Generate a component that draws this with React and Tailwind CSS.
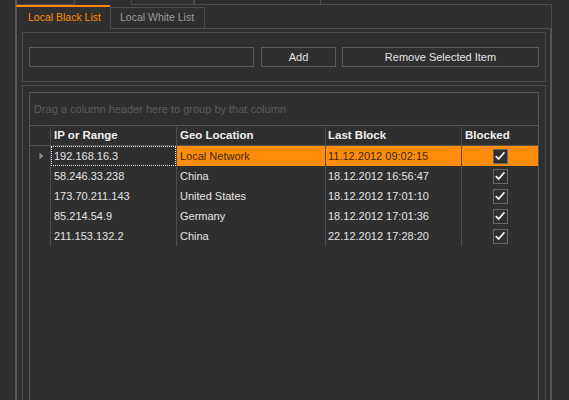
import React from 'react'

const rows = [
  { ip: '192.168.16.3', geo: 'Local Network', last: '11.12.2012 09:02:15' },
  { ip: '58.246.33.238', geo: 'China', last: '18.12.2012 16:56:47' },
  { ip: '173.70.211.143', geo: 'United States', last: '18.12.2012 17:01:10' },
  { ip: '85.214.54.9', geo: 'Germany', last: '18.12.2012 17:01:36' },
  { ip: '211.153.132.2', geo: 'China', last: '22.12.2012 17:28:20' },
]

const cols = 'grid grid-cols-[21px_126px_149px_136px_76px]'

function Check() {
  return (
    <div className="flex h-[15px] w-[15px] items-center justify-center border border-[#666] bg-[#2f2f2f]">
      <svg width="12" height="12" viewBox="0 0 12 12">
        <path d="M1.8 6.2 L4.6 9 L10.4 2.4" fill="none" stroke="#f0f0f0" strokeWidth="1.8" />
      </svg>
    </div>
  )
}

export default function App() {
  return (
    <div className="h-[400px] w-[569px] overflow-hidden bg-[#2f2f2f] pl-[15px] pr-[17px] font-['Liberation_Sans',Arial,sans-serif] text-[11px] text-[#e4e4e4]">
      {/* outer tab strip remnants */}
      <div className="flex h-[5px]">
        <div className="w-[60px] border-b border-l-2 border-r border-[#4c4c4c] border-l-[#565656]" />
        <div className="w-[56px]" />
        <div className="w-[63px] border-x border-b border-[#4c4c4c]" />
        <div className="w-[127px] border-x border-b border-[#4c4c4c]" />
        <div className="flex-1 border-b border-[#4c4c4c]" />
      </div>

      {/* tabs */}
      <div className="flex h-[24px]">
        <div className="flex w-[95px] items-center border-l-2 border-t-2 border-l-[#565656] border-t-[#ff8c00] pl-[11px] text-[10.5px] text-[#ff8c00]">
          Local Black List
        </div>
        <div className="mt-auto flex h-[22px] w-[95px] items-center border border-[#4c4c4c] pl-[9px] text-[10.5px] text-[#9c9c9c]">
          Local White List
        </div>
        <div className="flex-1 border-b border-r border-[#4c4c4c]" />
      </div>

      {/* tab page */}
      <div className="h-[380px] border-x-2 border-[#565656] pl-[5px] pr-[4px] pt-[3px]">
        <div className="flex h-[50px] items-center border border-[#4c4c4c] px-[6px]">
          <div className="h-[20px] w-[225px] border border-[#5a5a5a]" />
          <button className="ml-[7px] h-[20px] w-[75px] border border-[#5a5a5a] pt-[1px] text-[11px] text-[#e4e4e4]">
            Add
          </button>
          <button className="ml-[6px] h-[20px] flex-1 border border-[#5a5a5a] pt-[1px] text-[11px] text-[#e4e4e4]">
            Remove Selected Item
          </button>
        </div>

        <div className="mt-[3px] h-[400px] border border-[#4c4c4c] p-[6px]">
          <div className="h-[400px] border border-[#555]">
            <div className="flex h-[32px] items-center pl-[4px] pt-[1px] text-[#5c5c5c]">
              Drag a column header here to group by that column
            </div>
            <div className={`${cols} h-[21px] border-y border-[#555] pt-[1px] text-[11.5px] font-bold text-[#f0f0f0]`}>
              <div className="border-r border-[#4e4e4e]" />
              <div className="flex items-center border-r border-[#4e4e4e] pl-[3px]">IP or Range</div>
              <div className="flex items-center border-r border-[#4e4e4e] pl-[3px]">Geo Location</div>
              <div className="flex items-center border-r border-[#4e4e4e] pl-[2px]">Last Block</div>
              <div className="flex items-center pl-[3px]">Blocked</div>
            </div>
            {rows.map((r, i) => {
              const sel = i === 0
              return (
                <div key={r.ip} className={`${cols} h-[20px]`}>
                  <div className="flex items-center border-r border-[#4e4e4e] pl-[9px]">
                    {sel && (
                      <svg width="5" height="8" viewBox="0 0 5 8">
                        <path d="M0.5 0.5 L4.5 4 L0.5 7.5 Z" fill="#8a8a8a" />
                      </svg>
                    )}
                  </div>
                  <div className="border-r border-[#4e4e4e]">
                    <div
                      className={`flex h-full items-center pt-[1px] ${
                        sel ? 'border border-dotted border-[#e8e8e8] pl-[2px]' : 'pl-[3px]'
                      }`}
                    >
                      {r.ip}
                    </div>
                  </div>
                  <div
                    className={`flex items-center border-r border-[#4e4e4e] pl-[3px] pt-[1px] ${
                      sel ? 'bg-[#ff8c0a] text-[#3a2814]' : ''
                    }`}
                  >
                    {r.geo}
                  </div>
                  <div
                    className={`flex items-center border-r border-[#4e4e4e] pl-[2px] pt-[1px] ${
                      sel ? 'bg-[#ff8c0a] text-[#3a2814]' : ''
                    }`}
                  >
                    {r.last}
                  </div>
                  <div className={`flex items-center justify-center ${sel ? 'bg-[#ff8c0a]' : ''}`}>
                    <Check />
                  </div>
                </div>
              )
            })}
          </div>
        </div>
      </div>
    </div>
  )
}
